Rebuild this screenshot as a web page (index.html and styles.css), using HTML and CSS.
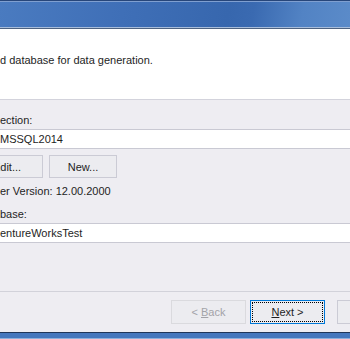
FILE: index.html
```html
<!DOCTYPE html>
<html lang="en">
<head>
    <meta charset="UTF-8">
    <title>Data Generation Wizard</title>
    <link rel="stylesheet" href="styles.css">
</head>
<body>

<div class="window">
    <!-- title bar -->
    <div class="titlebar"></div>

    <!-- page header -->
    <div class="header">
        <p class="intro">d database for data generation.</p>
    </div>

    <!-- connection settings -->
    <div class="content">
        <div class="label">ection:</div>
        <div class="textbox">MSSQL2014</div>

        <div class="btn-row">
            <button class="btn btn-edit">Edit...</button>
            <button class="btn">New...</button>
        </div>

        <div class="label version">er Version: 12.00.2000</div>

        <div class="label db-label">base:</div>
        <div class="textbox">entureWorksTest</div>
    </div>

    <!-- wizard buttons -->
    <div class="footer">
        <button class="btn nav" disabled>&lt; <u>B</u>ack</button>
        <button class="btn nav default"><u>N</u>ext &gt;</button>
        <button class="btn nav">Cancel</button>
    </div>

    <div class="taskbar"></div>
</div>

</body>
</html>
```

FILE: styles.css
```css
body {
    margin: 0;
    padding: 0;
    font-family: 'Liberation Sans', Arial, sans-serif;
    font-size: 11px;
    line-height: 13px;
    color: #1e1e1e;
    background: #eeedf2;
}

.window {
    width: 350px;
    height: 339px;
    overflow: hidden;
    background: #eeedf2;
}

/* blue caption strip */
.titlebar {
    height: 26px;
    border-top: 1px solid #27467a;
    border-bottom: 1px solid #a9bedb;
    box-shadow: inset 0 1px 0 #7f9fd0;
    background: linear-gradient(100deg, #4a7bc0 0%, #3f6fb7 35%, #3767ae 65%, #3a6ab1 72%, #5283c4 86%, #5b8bc9 100%);
}

.header {
    height: 45px;
    padding-top: 25px;
    background: #ffffff;
    border-top: 1px solid #4d6280;
    border-bottom: 1px solid #d3d3dc;
}

.intro {
    margin: 0;
}

.content {
    height: 177px;
    padding-top: 14px;
}

.label {
    height: 13px;
}

.version {
    margin-top: 7px;
}

.db-label {
    margin-top: 10px;
}

.textbox {
    margin-top: 2px;
    height: 13px;
    padding: 3px 0 2px 0;
    background: #ffffff;
    border-top: 1px solid #c9c9d3;
    border-bottom: 1px solid #c9c9d3;
}

.btn-row {
    display: flex;
    gap: 6px;
    margin-top: 6px;
}

.btn {
    font-family: inherit;
    font-size: 11px;
    line-height: 13px;
    color: #1e1e1e;
    width: 68px;
    height: 23px;
    padding: 5px 0 3px 0;
    margin: 0;
    background: #ececf0;
    border: 1px solid #cbcbd5;
    border-radius: 0;
    text-align: center;
    flex-shrink: 0;
}

.btn-edit {
    width: 72px;
    margin-left: -29px;
}

.footer {
    display: flex;
    gap: 4px;
    height: 32px;
    padding: 8px 0 0 171px;
    border-top: 1px solid #d2d2da;
}

.nav {
    width: 75px;
    height: 24px;
    padding: 5px 0 4px 0;
}

.nav:disabled {
    color: #a3a3a8;
    border-color: #dadade;
}

.default {
    border-color: #0078d7;
    outline: 1px dotted #000000;
    outline-offset: -3px;
}

.footer .nav:last-child {
    margin-left: 8px;
}

.taskbar {
    height: 5px;
    border-top: 1px solid #1f3558;
    border-bottom: 1px solid #8fb0da;
    background: #4577bd;
}
```
